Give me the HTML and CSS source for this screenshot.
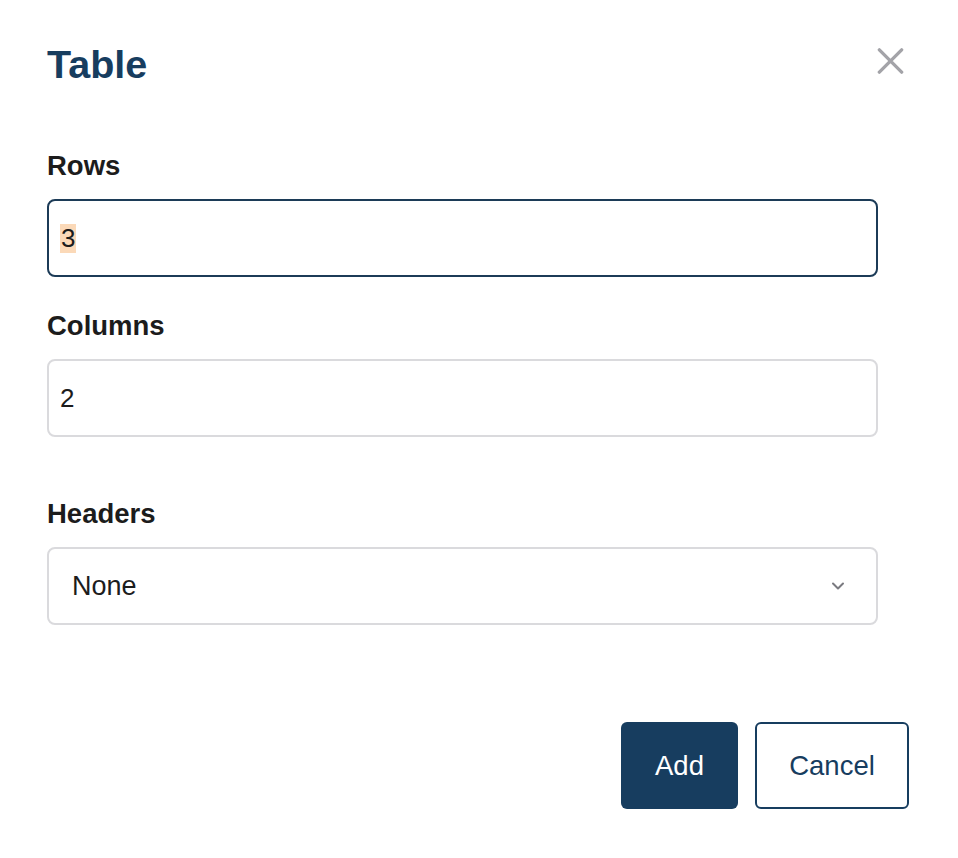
FILE: index.html
```html
<!DOCTYPE html>
<html lang="en">
<head>
<meta charset="utf-8">
<title>Table</title>
<link rel="stylesheet" href="styles.css">
</head>
<body>
<div class="dialog">
  <div class="header">
    <h1 class="title">Table</h1>
    <button class="close" aria-label="Close">
      <svg width="28" height="28" viewBox="0 0 28 28"><path d="M2 2 L26 26 M26 2 L2 26" stroke="#a3a3a8" stroke-width="3.6" stroke-linecap="round" fill="none"/></svg>
    </button>
  </div>
  <div class="field field-rows">
    <label class="label">Rows</label>
    <div class="input focused"><span class="sel">3</span></div>
  </div>
  <div class="field field-cols">
    <label class="label">Columns</label>
    <div class="input">2</div>
  </div>
  <div class="field field-headers">
    <label class="label">Headers</label>
    <div class="select"><span>None</span>
      <svg width="14" height="10" viewBox="0 0 14 10"><path d="M2 2.5 L7 7.5 L12 2.5" stroke="#7a7a80" stroke-width="2" fill="none" stroke-linecap="round" stroke-linejoin="round"/></svg>
    </div>
  </div>
  <div class="actions">
    <button class="btn btn-primary">Add</button>
    <button class="btn btn-secondary">Cancel</button>
  </div>
</div>
</body>
</html>
```
FILE: styles.css
```css
* { box-sizing: border-box; }
html, body { margin: 0; padding: 0; background: #fff; }
body { font-family: "Liberation Sans", Arial, sans-serif; color: #1c1c1c; }
.dialog { width: 958px; padding: 42px 49px 0 47px; }
.header { display: flex; justify-content: space-between; align-items: flex-start; height: 109px; }
.title { margin: 0; font-size: 39.5px; line-height: 44px; font-weight: 700; color: #173d5f; }
.close { background: none; border: 0; padding: 0; margin: 6px 5px 0 0; width: 27px; height: 26px; display: flex; }
.close svg { width: 27px; height: 26px; }
.field { width: 831px; }
.label { display: block; font-size: 27.5px; line-height: 30px; font-weight: 700; color: #1c1c1c; margin-bottom: 18px; }
.field-cols { margin-top: 34px; }
.field-headers { margin-top: 62px; }
.input { height: 78px; border: 2px solid #dadadd; border-radius: 8px; padding: 0 11px; display: flex; align-items: center; font-size: 26px; color: #1c1c1c; }
.input.focused { border-color: #1c3b57; }
.sel { background: #fbd9b8; line-height: 29px; padding: 0 1px; }
.select { height: 78px; border: 2px solid #dadadd; border-radius: 8px; padding: 0 31px 0 23px; display: flex; align-items: center; justify-content: space-between; font-size: 27px; color: #1c1c1c; }
.actions { display: flex; justify-content: flex-end; gap: 17px; margin-top: 97px; }
.btn { height: 87px; border-radius: 6px; font-family: "Liberation Sans", Arial, sans-serif; font-size: 27.5px; padding: 0; }
.btn-primary { width: 117px; background: #173d5f; color: #fff; border: 0; }
.btn-secondary { width: 154px; background: #fff; color: #173d5f; border: 2px solid #173d5f; }
```
